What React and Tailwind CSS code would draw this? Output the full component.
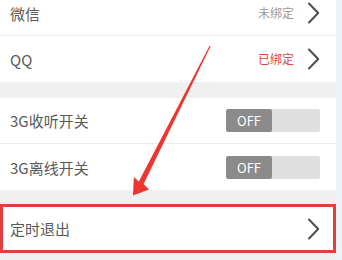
import React from 'react';

const font = { fontFamily: '"Noto Sans CJK SC", "Noto Sans", sans-serif' };

function Chevron() {
  return (
    <svg width="13" height="22" viewBox="0 0 13 22" fill="none">
      <path d="M2 1.5 L11.2 11 L2 20.5" stroke="#4d4d4d" strokeWidth="2" strokeLinecap="round" strokeLinejoin="round" />
    </svg>
  );
}

function Toggle() {
  return (
    <div className="flex w-[94px] h-[23px] rounded-[2px] bg-[#dfdfdf] overflow-hidden">
      <div className="w-[46px] h-full bg-[#8b8b8b] rounded-[2px] flex items-center justify-center text-white text-[13px] leading-none">
        OFF
      </div>
    </div>
  );
}

function Row({ label, children, className = '' }) {
  return (
    <div className={`flex items-center justify-between bg-white pl-[10px] pr-[16px] ${className}`}>
      <span className="text-[15px] text-[#5a5a5a] leading-none">{label}</span>
      {children}
    </div>
  );
}

export default function App() {
  return (
    <div className="relative w-[342px] h-[260px] overflow-hidden bg-[#f0f0f0] flex" style={font}>
      <div className="w-[336px] flex flex-col">
        <Row label="微信" className="-mt-[9px] h-[45px] border-b border-[#ececec]">
          <div className="flex items-center gap-[13px]">
            <span className="text-[12px] text-[#9a9a9a]">未绑定</span>
            <Chevron />
          </div>
        </Row>
        <Row label="QQ" className="h-[46px]">
          <div className="flex items-center gap-[13px]">
            <span className="text-[12px] text-[#e2483d]">已绑定</span>
            <Chevron />
          </div>
        </Row>
        <div className="h-[16px] shrink-0" />
        <Row label="3G收听开关" className="h-[46px] border-b border-[#ececec]">
          <Toggle />
        </Row>
        <Row label="3G离线开关" className="h-[46px]">
          <Toggle />
        </Row>
        <div className="h-[14px] shrink-0" />
        <div className="flex items-center justify-between bg-white h-[49px] border-[3px] border-[#e33e3e] pl-[7px] pr-[13px]">
          <span className="text-[15px] text-[#5a5a5a] leading-none">定时退出</span>
          <Chevron />
        </div>
      </div>
      <div className="flex-1 bg-[#edf1f8]" />
      <svg className="absolute inset-0 pointer-events-none" width="342" height="260" viewBox="0 0 342 260">
        <polygon
          points="209.6,45.8 210.6,46.3 143.6,184 149,189.5 133,195.5 133.8,177 138.8,181.5"
          fill="#ee3530"
        />
      </svg>
    </div>
  );
}
